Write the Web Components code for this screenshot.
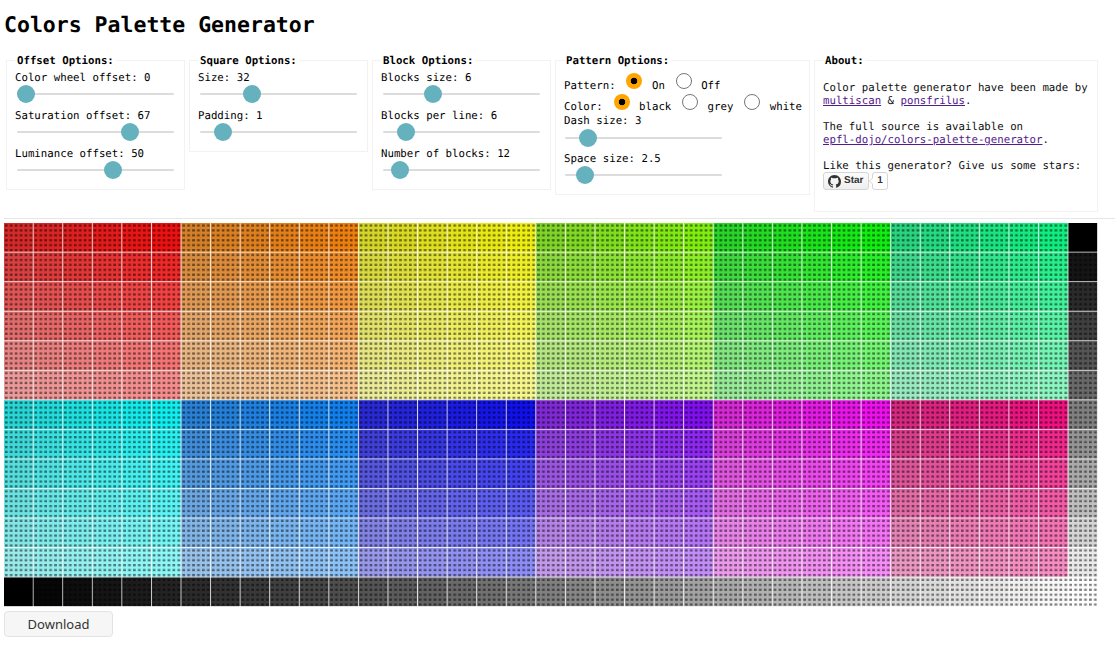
<!DOCTYPE html>
<html><head><meta charset="utf-8"><title>Colors Palette Generator</title>
<style>
html,body{margin:0;padding:0;background:#fff}
body{font-family:"DejaVu Sans Mono",monospace;font-size:10.72px;line-height:13px;color:#000;overflow:hidden;text-rendering:geometricPrecision}
</style></head><body>
<palette-app>
  <options-box title="Offset Options:" style="--w:179px">
    <range-row label="Color wheel offset: 0" frac="0"></range-row>
    <range-row label="Saturation offset: 67" frac=".748"></range-row>
    <range-row label="Luminance offset: 50" frac=".626"></range-row>
  </options-box>
  <options-box title="Square Options:" style="--w:179px">
    <range-row label="Size: 32" frac=".309"></range-row>
    <range-row label="Padding: 1" frac=".1"></range-row>
  </options-box>
  <options-box title="Block Options:" style="--w:179px">
    <range-row label="Blocks size: 6" frac=".295"></range-row>
    <range-row label="Blocks per line: 6" frac=".1"></range-row>
    <range-row label="Number of blocks: 12" frac=".058"></range-row>
  </options-box>
  <options-box title="Pattern Options:" style="--w:255px">
    <radio-row label="Pattern:" name="pattern" options="On,Off" checked="On" style="--h:21px"></radio-row>
    <radio-row label="Color:" name="color" options="black,grey,white" checked="black" style="--h:22px"></radio-row>
    <range-row label="Dash size: 3" frac=".1" style="--ml:1px;--gap:2px;--after:5px"></range-row>
    <range-row label="Space size: 2.5" frac=".079" style="--ml:1px;--gap:1px"></range-row>
  </options-box>
  <options-box title="About:" style="--w:284px">
    <about-text></about-text>
  </options-box>
</palette-app>
<template id="app-t"><style>
:host{display:block;padding-left:4px}
h1{font:bold 21.5px/25px "DejaVu Sans Mono",monospace;margin:0;padding-top:13px;height:41px;box-sizing:border-box}
.opts{display:flex;align-items:flex-start;gap:4px;padding-left:2px;box-sizing:border-box;padding-top:13px;height:172px}
hr{border:0;border-top:1px solid #e6e6e6;margin:5px 0 4px;height:0;}
palette-canvas{display:block}
.dl{margin-top:4px}
button{display:block;box-sizing:border-box;width:109px;height:26px;padding:0;font:13px/24px "Noto Sans",sans-serif;color:#333;background:#f6f6f6;border:1px solid #e3e3e3;border-radius:4px}
</style><h1>Colors Palette Generator</h1><div class="opts"><slot></slot></div><hr><palette-canvas></palette-canvas><div class="dl"><button>Download</button></div></template>
<template id="box-t"><style>
:host{display:block;width:var(--w);flex:none}
fieldset{margin:0;padding:4px 8px;border:1px solid #f2f2f2;min-width:0;box-sizing:border-box;width:100%}
legend{padding:0 2px;font-weight:bold;line-height:13px}
</style><fieldset><legend></legend><slot></slot></fieldset></template>
<template id="range-t"><style>
:host{display:block}
.l{height:13px;line-height:13px;white-space:pre}
input{-webkit-appearance:none;appearance:none;display:block;width:157px;height:18px;margin:var(--gap,1px) 2px var(--after,6px) var(--ml,2px);padding:0;background:transparent;outline:0}
input::-webkit-slider-runnable-track{height:2px;background:#dcdcdc;border-radius:1px}
input::-webkit-slider-thumb{-webkit-appearance:none;width:18px;height:18px;border-radius:50%;background:#65b1bd;margin-top:-8px;border:0}
</style><div class="l"></div><input type="range" min="0" max="1000"></template>
<template id="radio-t"><style>
:host{display:block;height:var(--h);white-space:pre}
input{-webkit-appearance:none;appearance:none;box-sizing:border-box;width:16px;height:16px;margin:2px 3px 0 4.4px;border-radius:50%;background:#fff;border:1px solid #767676;padding:0;outline:0;vertical-align:baseline}
input:checked{border:0;background:radial-gradient(circle,#000 0,#000 3px,#ffa500 3.6px)}
</style><span id="r"></span></template>
<template id="about-t"><style>
:host{display:block;padding-top:10px;padding-bottom:17px;color:#111}
p{margin:0 0 13px}
p:last-child{margin:0}
a{color:#551a8b;text-decoration:underline}
</style><p>Color palette generator have been made by<br><a href="#m">multiscan</a> &amp; <a href="#p">ponsfrilus</a>.</p><p>The full source is available on<br><a href="#s">epfl-dojo/colors-palette-generator</a>.</p><p>Like this generator? Give us some stars:<br><github-star></github-star></p></template>
<template id="star-t"><style>
:host{display:flex;align-items:stretch;height:18px;font:bold 10px/16px "Liberation Sans",Arial,sans-serif;color:#333;width:70px}
.b{box-sizing:border-box;width:46px;display:flex;align-items:center;gap:3px;padding-left:4px;border:1px solid #d5d5d5;border-radius:3px;background:linear-gradient(#fcfcfc,#eee)}
.c{position:relative;box-sizing:border-box;width:16px;margin-left:3px;text-align:center;border:1px solid #d5d5d5;border-radius:3px;background:#fff}
.c::before{content:"";position:absolute;left:-4px;top:5px;width:5px;height:5px;background:#fff;border-left:1px solid #d5d5d5;border-bottom:1px solid #d5d5d5;transform:rotate(45deg) scale(.7)}
svg{width:13px;height:13px;flex:none}
</style><span class="b"><svg viewBox="0 0 16 16"><path fill="#333" d="M8 0C3.58 0 0 3.58 0 8c0 3.54 2.29 6.53 5.47 7.59.4.07.55-.17.55-.38 0-.19-.01-.82-.01-1.49-2.01.37-2.53-.49-2.69-.94-.09-.23-.48-.94-.82-1.13-.28-.15-.68-.52-.01-.53.63-.01 1.08.58 1.23.82.72 1.21 1.87.87 2.33.66.07-.52.28-.87.51-1.07-1.78-.2-3.64-.89-3.64-3.95 0-.87.31-1.59.82-2.15-.08-.2-.36-1.02.08-2.12 0 0 .67-.21 2.2.82.64-.18 1.32-.27 2-.27s1.36.09 2 .27c1.53-1.04 2.2-.82 2.2-.82.44 1.1.16 1.92.08 2.12.51.56.82 1.27.82 2.15 0 3.07-1.87 3.75-3.65 3.95.29.25.54.73.54 1.48 0 1.07-.01 1.93-.01 2.2 0 .21.15.46.55.38A8.01 8.01 0 0 0 16 8c0-4.42-3.58-8-8-8z"/></svg>Star</span><span class="c">1</span></template>
<template id="canvas-t"><style>
:host{display:block;width:1093.6px;height:384.2px}
canvas{display:block;width:100%;height:100%}
</style><canvas width="1221" height="429"></canvas></template>
<script>
const mount=(el,id)=>{const s=el.attachShadow({mode:"open"});s.appendChild(document.getElementById(id).content.cloneNode(true));return s};
customElements.define("github-star",class extends HTMLElement{constructor(){super();mount(this,"star-t")}});
customElements.define("about-text",class extends HTMLElement{constructor(){super();mount(this,"about-t")}});
customElements.define("options-box",class extends HTMLElement{connectedCallback(){if(this.shadowRoot)return;const s=mount(this,"box-t");s.querySelector("legend").textContent=this.getAttribute("title");this.removeAttribute("title")}});
customElements.define("range-row",class extends HTMLElement{connectedCallback(){if(this.shadowRoot)return;const s=mount(this,"range-t");s.querySelector(".l").textContent=this.getAttribute("label");const i=s.querySelector("input");i.value=Math.round(parseFloat(this.getAttribute("frac"))*1000);i.setAttribute("aria-label",this.getAttribute("label"))}});
customElements.define("radio-row",class extends HTMLElement{connectedCallback(){if(this.shadowRoot)return;const s=mount(this,"radio-t"),r=s.getElementById("r");r.append(this.getAttribute("label")+" ");const opts=this.getAttribute("options").split(",");opts.forEach((o,n)=>{const i=document.createElement("input");i.type="radio";i.name=this.getAttribute("name");i.checked=o===this.getAttribute("checked");r.append(i," "+o+(n<opts.length-1?" ":""))})}});
customElements.define("palette-canvas",class extends HTMLElement{connectedCallback(){if(this.shadowRoot)return;const s=mount(this,"canvas-t"),g=s.querySelector("canvas").getContext("2d");
 const P=33,S=32,N=6,L=6,B=12,E=.1;
 g.fillStyle="#fff";g.fillRect(0,0,1221,429);
 const cell=(c,r,col)=>{const x=c*P,y=r*P;g.fillStyle=col;g.fillRect(x-E,y-E,S+2*E,S+2*E);
  g.fillStyle="rgba(0,0,0,.5)";
  for(let py=0;py<S-1;py+=5.5)for(let px=0;px<S-1;px+=5.5)g.fillRect(x+px+1,y+py+1.5,3,2.5)};
 for(let b=0;b<B;b++){const bx=(b%L)*N,by=Math.floor(b/L)*N,h=b*360/B;
  for(let j=0;j<N;j++)for(let i=0;i<N;i++)cell(bx+i,by+j,`hsl(${h},${67+i*4}%,${50+j*5.2}%)`)}
 const W=L*N,H=2*N;
 for(let r=0;r<H;r++){const v=Math.round(r/H*255);cell(W,r,`rgb(${v},${v},${v})`)}
 for(let c=0;c<=W;c++){const v=Math.round(c/W*255);cell(c,H,`rgb(${v},${v},${v})`)}
}});
customElements.define("palette-app",class extends HTMLElement{constructor(){super();mount(this,"app-t")}});
</script>
</body></html>
